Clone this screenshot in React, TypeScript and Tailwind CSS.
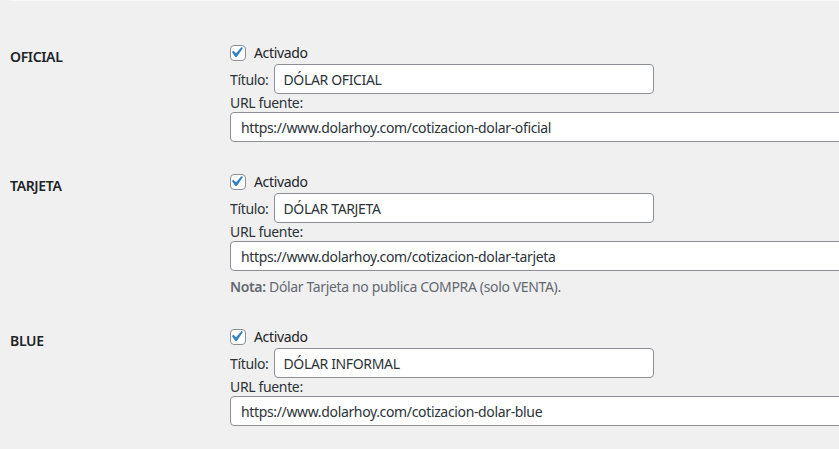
import React from 'react';

type Fila = {
  clave: string;
  titulo: string;
  url: string;
  nota?: string;
};

const filas: Fila[] = [
  { clave: 'OFICIAL', titulo: 'DÓLAR OFICIAL', url: 'https://www.dolarhoy.com/cotizacion-dolar-oficial' },
  {
    clave: 'TARJETA',
    titulo: 'DÓLAR TARJETA',
    url: 'https://www.dolarhoy.com/cotizacion-dolar-tarjeta',
    nota: 'Dólar Tarjeta no publica COMPRA (solo VENTA).',
  },
  { clave: 'BLUE', titulo: 'DÓLAR INFORMAL', url: 'https://www.dolarhoy.com/cotizacion-dolar-blue' },
];

const Check = () => (
  <span className="relative inline-block h-4 w-4 shrink-0 rounded-[4px] border border-[#8c8f94] bg-white">
    <svg viewBox="4 3 15 15" className="absolute -left-px -top-px h-4 w-4">
      <path d="M14.83 4.89l1.34.94-5.81 8.38H9.02L5.78 9.67l1.34-1.25 2.57 2.4z" fill="#3582c4" />
    </svg>
  </span>
);

const App = () => {
  return (
    <div
      className="min-h-screen overflow-hidden bg-[#f0f0f1] text-[14px] tracking-[-0.35px] text-[#1d2327]"
      style={{ fontFamily: '"Noto Sans", "Open Sans", sans-serif' }}
    >
      <div className="ml-[10px] h-px bg-[#f6f6f6]" />
      <div className="pt-[28px]">
        {filas.map((f) => (
          <div key={f.clave} className="flex py-4">
            <div className="w-[230px] shrink-0 pl-[10px] pt-[3px] text-[14px] font-semibold leading-[18px]">
              {f.clave}
            </div>
            <div className="min-w-0 flex-1">
              <label className="flex h-4 items-center gap-2 leading-none">
                <Check />
                <span>Activado</span>
              </label>
              <div className="mt-[3px] flex items-center gap-[5px]">
                <span className="text-[#2c3338]">Título:</span>
                <input
                  readOnly
                  value={f.titulo}
                  className="h-[30px] w-[380px] rounded-[4px] border border-[#8c8f94] bg-white px-[9px] text-[14px] tracking-[-0.35px] text-[#2c3338] outline-none"
                />
              </div>
              <div className="h-[18px] leading-[18px] text-[#2c3338]">URL fuente:</div>
              <input
                readOnly
                value={f.url}
                className="block h-[30px] w-[720px] rounded-[4px] border border-[#8c8f94] bg-white px-[10px] text-[14px] tracking-[-0.35px] text-[#2c3338] outline-none"
              />
              {f.nota && (
                <p className="mt-[5px] leading-[21px] text-[#646970]">
                  <strong className="font-semibold">Nota:</strong> {f.nota}
                </p>
              )}
            </div>
          </div>
        ))}
      </div>
    </div>
  );
};

export default App;
